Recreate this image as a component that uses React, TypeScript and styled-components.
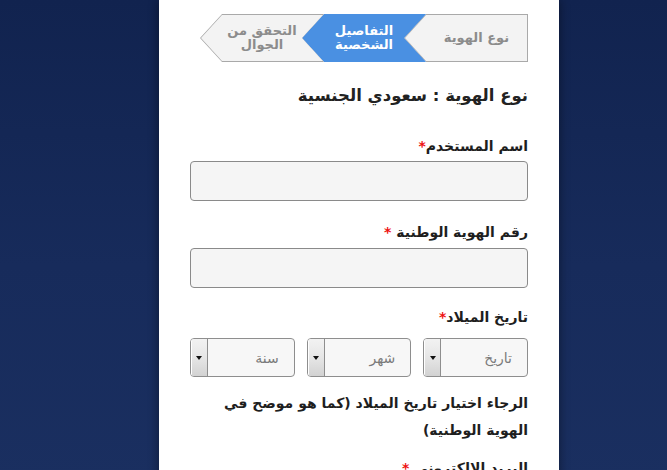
import React from "react";
import styled, { createGlobalStyle } from "styled-components";

const Global = createGlobalStyle`
  html, body { margin: 0; padding: 0; }
  body {
    background: linear-gradient(180deg, #11234f 0%, #172b5b 55%, #1a2f60 100%);
    min-height: 470px;
    overflow: hidden;
    font-family: "DejaVu Sans", "Noto Sans", sans-serif;
  }
`;

const Page = styled.div`
  display: flex;
  padding-left: 159px;
  min-height: 470px;
`;

const Panel = styled.div`
  width: 400px;
  min-height: 470px;
  background: #ffffff;
  box-shadow: 0 0 10px rgba(0, 0, 0, 0.45);
  direction: rtl;
  box-sizing: border-box;
  padding: 14px 31px 0 31px;
`;

const Stepper = styled.div`
  display: flex;
  height: 48px;
`;

const Step = styled.div<{ $active?: boolean; $first?: boolean }>`
  width: 124px;
  height: 48px;
  box-sizing: border-box;
  padding: 1px;
  margin-right: ${(p) => (p.$first ? "0" : "-22px")};
  background: ${(p) => (p.$active ? "#4a90e2" : "#a9a9a9")};
  clip-path: ${(p) =>
    p.$first
      ? "polygon(22px 0, 100% 0, 100% 100%, 22px 100%, 0 50%)"
      : "polygon(22px 0, 100% 0, calc(100% - 22px) 50%, 100% 100%, 22px 100%, 0 50%)"};
`;

const StepInner = styled.div<{ $active?: boolean; $first?: boolean }>`
  width: 100%;
  height: 100%;
  box-sizing: border-box;
  display: flex;
  align-items: center;
  justify-content: center;
  text-align: center;
  padding: ${(p) => (p.$first ? "0 0 0 21px" : "0 21px 0 21px")};
  background: ${(p) => (p.$active ? "#4a90e2" : "#f3f3f3")};
  color: ${(p) => (p.$active ? "#ffffff" : "#8c8c8c")};
  font-weight: bold;
  font-size: 13px;
  line-height: 14px;
  clip-path: ${(p) =>
    p.$first
      ? "polygon(21px 0, 100% 0, 100% 100%, 21px 100%, 0 50%)"
      : "polygon(21px 0, 100% 0, calc(100% - 21px) 50%, 100% 100%, 21px 100%, 0 50%)"};
`;

const Heading = styled.h2`
  margin: 23px 0 0 0;
  font-size: 16.5px;
  line-height: 22px;
  font-weight: bold;
  color: #222;
`;

const Group = styled.div<{ $top: number }>`
  margin-top: ${(p) => p.$top}px;
`;

const Label = styled.label<{ $gap: number }>`
  display: block;
  font-size: 14px;
  line-height: 20px;
  font-weight: bold;
  color: #1e1e1e;
  margin-bottom: ${(p) => p.$gap}px;
`;

const Req = styled.span`
  color: #ee1111;
`;

const TextInput = styled.input`
  display: block;
  width: 100%;
  height: 40px;
  box-sizing: border-box;
  border: 1px solid #8a8a8a;
  border-radius: 4px;
  background: #f5f5f5;
  font-family: inherit;
  font-size: 14px;
  padding: 0 10px;
  direction: rtl;
`;

const SelectRow = styled.div`
  display: flex;
  gap: 12px;
`;

const SelectBox = styled.div`
  flex: 1;
  height: 39px;
  box-sizing: border-box;
  border: 1px solid #8e8e8e;
  border-radius: 4px;
  background: #f7f7f7;
  display: flex;
  align-items: center;
  overflow: hidden;
`;

const SelectText = styled.span`
  flex: 1;
  padding-right: 15px;
  font-size: 14px;
  color: #7a7a7a;
`;

const DropButton = styled.div`
  width: 17px;
  height: 100%;
  box-sizing: border-box;
  border-right: 1px solid #8e8e8e;
  border-left: 1px solid #ffffff;
  background: linear-gradient(180deg, #f2f2f2 0%, #e6e6e6 50%, #d2d2d2 100%);
  display: flex;
  align-items: center;
  justify-content: center;
`;

const Arrow = styled.span`
  width: 0;
  height: 0;
  border-left: 3.5px solid transparent;
  border-right: 3.5px solid transparent;
  border-top: 4px solid #111;
`;

const Help = styled.p`
  margin: 13px 0 0 0;
  font-size: 14px;
  line-height: 27px;
  font-weight: bold;
  color: #1e1e1e;
`;

const Select = ({ text }: { text: string }) => (
  <SelectBox>
    <SelectText>{text}</SelectText>
    <DropButton>
      <Arrow />
    </DropButton>
  </SelectBox>
);

export default function App() {
  return (
    <>
      <Global />
      <Page>
        <Panel>
          <Stepper>
            <Step $first>
              <StepInner $first>نوع الهوية</StepInner>
            </Step>
            <Step $active>
              <StepInner $active>
                التفاصيل
                <br />
                الشخصية
              </StepInner>
            </Step>
            <Step>
              <StepInner>
                التحقق من
                <br />
                الجوال
              </StepInner>
            </Step>
          </Stepper>

          <Heading>نوع الهوية : سعودي الجنسية</Heading>

          <Group $top={29}>
            <Label $gap={5}>
              اسم المستخدم<Req>*</Req>
            </Label>
            <TextInput type="text" />
          </Group>

          <Group $top={21}>
            <Label $gap={6}>
              رقم الهوية الوطنية <Req>*</Req>
            </Label>
            <TextInput type="text" />
          </Group>

          <Group $top={19}>
            <Label $gap={11}>
              تاريخ الميلاد<Req>*</Req>
            </Label>
            <SelectRow>
              <Select text="تاريخ" />
              <Select text="شهر" />
              <Select text="سنة" />
            </SelectRow>
          </Group>

          <Help>الرجاء اختيار تاريخ الميلاد (كما هو موضح في الهوية الوطنية)</Help>

          <Group $top={14}>
            <Label $gap={5}>
              البريد الإلكتروني <Req>*</Req>
            </Label>
          </Group>
        </Panel>
      </Page>
    </>
  );
}
